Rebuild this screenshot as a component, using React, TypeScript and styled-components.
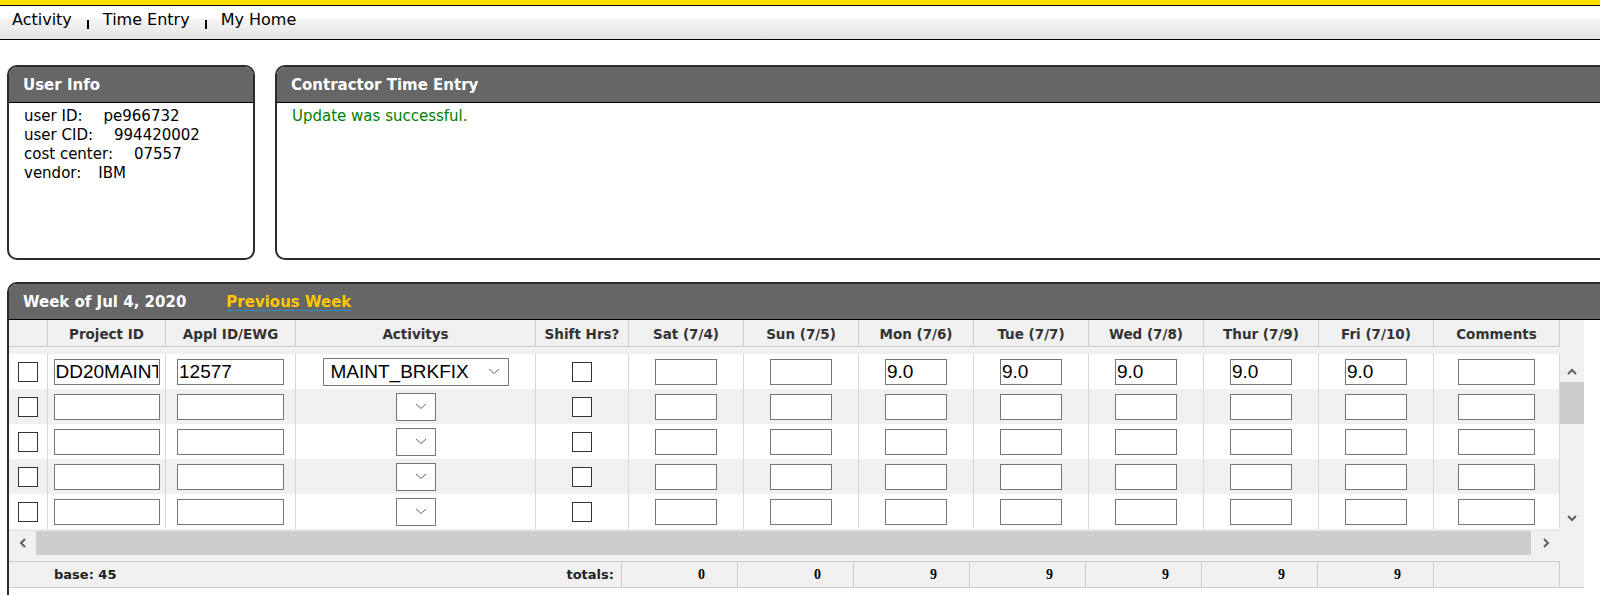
import styled, { createGlobalStyle } from "styled-components";

interface Row {
  project: string;
  appl: string;
  activity: string;
  days: string[];
}

const COLUMNS = [
  "",
  "Project ID",
  "Appl ID/EWG",
  "Activitys",
  "Shift Hrs?",
  "Sat (7/4)",
  "Sun (7/5)",
  "Mon (7/6)",
  "Tue (7/7)",
  "Wed (7/8)",
  "Thur (7/9)",
  "Fri (7/10)",
  "Comments",
];

const emptyDays = ["", "", "", "", "", "", ""];

const rows: Row[] = [
  {
    project: "DD20MAINT",
    appl: "12577",
    activity: "MAINT_BRKFIX",
    days: ["", "", "9.0", "9.0", "9.0", "9.0", "9.0"],
  },
  { project: "", appl: "", activity: "", days: emptyDays },
  { project: "", appl: "", activity: "", days: emptyDays },
  { project: "", appl: "", activity: "", days: emptyDays },
  { project: "", appl: "", activity: "", days: emptyDays },
];

const totals = [0, 0, 9, 9, 9, 9, 9];

const Chevron = ({ dir, size = 10 }: { dir: "up" | "down" | "left" | "right"; size?: number }) => {
  const rot = { down: 0, up: 180, left: 90, right: -90 }[dir];
  return (
    <svg width={size} height={size} viewBox="0 0 10 10" style={{ transform: `rotate(${rot}deg)` }}>
      <polyline points="1,3 5,7 9,3" fill="none" stroke="#606060" strokeWidth="2" />
    </svg>
  );
};

const SelectArrow = () => (
  <svg width="12" height="7" viewBox="0 0 12 7">
    <polyline points="1,1 6,5.5 11,1" fill="none" stroke="#666" strokeWidth="1" />
  </svg>
);

const App = () => {
  return (
    <Page>
      <GlobalStyle />
      <TopStrip />
      <Nav>
        <NavLink href="#">Activity</NavLink>
        <Sep />
        <NavLink href="#">Time Entry</NavLink>
        <Sep />
        <NavLink href="#">My Home</NavLink>
      </Nav>

      <Content>
        <TopRow>
          <Panel $width={248} $height={195}>
            <PanelHeader>User Info</PanelHeader>
            <PanelBody>
              <div>
                user ID:<Value $gap={21}>pe966732</Value>
              </div>
              <div>
                user CID:<Value $gap={21}>994420002</Value>
              </div>
              <div>
                cost center:<Value $gap={21}>07557</Value>
              </div>
              <div>
                vendor:<Value $gap={17}>IBM</Value>
              </div>
            </PanelBody>
          </Panel>
          <Panel $width={1400} $height={195}>
            <PanelHeader>Contractor Time Entry</PanelHeader>
            <PanelBody>
              <Success>Update was successful.</Success>
            </PanelBody>
          </Panel>
        </TopRow>

        <Panel $width={1640} $height={340}>
          <PanelHeader>
            <span>Week of Jul 4, 2020</span>
            <PrevLink href="#">Previous Week</PrevLink>
          </PanelHeader>
          <Grid>
            <HeaderRow>
              {COLUMNS.map((c, i) => (
                <HeaderCell key={i}>{c}</HeaderCell>
              ))}
            </HeaderRow>
            <ScrollArea>
              <RowsBox>
                {rows.map((r, i) => (
                  <BodyRow key={i} $alt={i % 2 === 1}>
                    <BodyCell>
                      <Check type="checkbox" />
                    </BodyCell>
                    <BodyCell>
                      <TextInput $w={106} defaultValue={r.project} />
                    </BodyCell>
                    <BodyCell>
                      <TextInput $w={107} defaultValue={r.appl} />
                    </BodyCell>
                    <BodyCell>
                      <FakeSelect $w={r.activity ? 186 : 40}>
                        {r.activity}
                        <SelectArrowBox>
                          <SelectArrow />
                        </SelectArrowBox>
                      </FakeSelect>
                    </BodyCell>
                    <BodyCell>
                      <Check type="checkbox" />
                    </BodyCell>
                    {r.days.map((d, j) => (
                      <BodyCell key={j}>
                        <TextInput $w={62} defaultValue={d} />
                      </BodyCell>
                    ))}
                    <BodyCell>
                      <TextInput $w={77} defaultValue="" />
                    </BodyCell>
                  </BodyRow>
                ))}
              </RowsBox>
              <VScroll>
                <ScrollBtn $h={28} $pt={7}>
                  <Chevron dir="up" />
                </ScrollBtn>
                <Thumb $h={42} />
                <ScrollFill />
                <ScrollBtn $h={24}>
                  <Chevron dir="down" />
                </ScrollBtn>
              </VScroll>
              <HScroll>
                <ScrollBtn $w={27}>
                  <Chevron dir="left" />
                </ScrollBtn>
                <Thumb $w={1495} />
                <ScrollBtn $w={29}>
                  <Chevron dir="right" />
                </ScrollBtn>
              </HScroll>
              <Corner />
            </ScrollArea>
            <FooterRow>
              <FooterLabel>
                <span>base: 45</span>
                <span>totals:</span>
              </FooterLabel>
              {totals.map((t, i) => (
                <TotalCell key={i}>{t}</TotalCell>
              ))}
              <TotalCell $last />
            </FooterRow>
          </Grid>
        </Panel>
      </Content>
    </Page>
  );
};

export default App;

const GlobalStyle = createGlobalStyle`
  html, body {
    margin: 0;
    padding: 0;
    overflow: hidden;
    background: #fff;
  }
  body {
    font-family: "DejaVu Sans", sans-serif;
    color: #000;
  }
`;

const Page = styled.div`
  width: 1700px;
`;

const TopStrip = styled.div`
  height: 5px;
  background: #ffe100;
  border-bottom: 1px solid #000;
`;

const Nav = styled.div`
  height: 34px;
  box-sizing: border-box;
  display: flex;
  align-items: center;
  padding: 0 12px 6px;
  background: linear-gradient(to bottom, #fff 0%, #fff 36%, #f4f4f4 40%, #ececec 70%, #e3e3e3 100%);
  border-bottom: 1px solid #000;
`;

const NavLink = styled.a`
  font-size: 16px;
  color: #000;
  text-decoration: none;
`;

const Sep = styled.span`
  display: inline-block;
  width: 2px;
  height: 9px;
  background: #000;
  margin: 10px 14px 0 15px;
`;

const Content = styled.div`
  padding: 25px 0 0 7px;
`;

const TopRow = styled.div`
  display: flex;
  gap: 20px;
  margin-bottom: 22px;
`;

const Panel = styled.div<{ $width: number; $height: number }>`
  width: ${(p) => p.$width}px;
  height: ${(p) => p.$height}px;
  flex-shrink: 0;
  box-sizing: border-box;
  border: 2px solid #2b2b2b;
  border-radius: 10px;
  overflow: hidden;
  background: #fff;
`;

const PanelHeader = styled.div`
  height: 36px;
  box-sizing: border-box;
  display: flex;
  align-items: center;
  gap: 40px;
  padding-left: 14px;
  background: #666;
  border-bottom: 1px solid #000;
  color: #fff;
  font-size: 15px;
  font-weight: bold;
`;

const PrevLink = styled.a`
  color: #ffc800;
  text-decoration: underline;
  text-decoration-color: #2f8fc0;
  text-underline-offset: 3px;
`;

const PanelBody = styled.div`
  padding: 4px 15px;
  font-size: 15px;
  line-height: 19px;
`;

const Value = styled.span<{ $gap: number }>`
  margin-left: ${(p) => p.$gap}px;
`;

const Success = styled.div`
  color: #008000;
`;

const COLS = "39px 118px 130px 240px 93px repeat(7, 115px) 126px";

const Grid = styled.div`
  width: 1575px;
  background: #f0f0f0;
  border-bottom: 1px solid #ccc;
`;

const HeaderRow = styled.div`
  display: grid;
  grid-template-columns: ${COLS};
  height: 27px;
  margin-bottom: 7px;
`;

const HeaderCell = styled.div`
  box-sizing: border-box;
  border-right: 1px solid #ccc;
  border-bottom: 1px solid #ccc;
  display: flex;
  align-items: center;
  justify-content: center;
  padding-top: 1px;
  font-size: 13.5px;
  font-weight: bold;
  color: #333;
`;

const ScrollArea = styled.div`
  display: grid;
  grid-template-columns: 1551px 24px;
  grid-template-rows: 176px 25px;
`;

const RowsBox = styled.div`
  overflow: hidden;
`;

const BodyRow = styled.div<{ $alt: boolean }>`
  display: grid;
  grid-template-columns: ${COLS};
  height: 35px;
  background: ${(p) => (p.$alt ? "#f0f0f0" : "#fff")};
`;

const BodyCell = styled.div`
  box-sizing: border-box;
  border-right: 1px solid #d8d8d8;
  display: flex;
  align-items: center;
  justify-content: center;
`;

const Check = styled.input`
  appearance: none;
  margin: 0;
  width: 20px;
  height: 20px;
  box-sizing: border-box;
  border: 1px solid #333;
  background: #fff;
`;

const TextInput = styled.input<{ $w: number }>`
  width: ${(p) => p.$w}px;
  height: 26px;
  box-sizing: border-box;
  border: 1px solid #767676;
  border-radius: 0;
  padding: 0 1px;
  margin: 0;
  background: #fff;
  color: #000;
  font-family: "Liberation Sans", Arial, sans-serif;
  font-size: 19px;
  outline: none;
`;

const FakeSelect = styled.div<{ $w: number }>`
  width: ${(p) => p.$w}px;
  height: 28px;
  box-sizing: border-box;
  border: 1px solid #767676;
  background: #fff;
  display: flex;
  align-items: center;
  padding: 0 8px 0 7px;
  font-family: "Liberation Sans", Arial, sans-serif;
  font-size: 19px;
  color: #000;
`;

const SelectArrowBox = styled.span`
  margin-left: auto;
  display: flex;
`;

const VScroll = styled.div`
  display: flex;
  flex-direction: column;
  background: #f0f0f0;
`;

const HScroll = styled.div`
  display: flex;
  background: #f0f0f0;
  border-top: 1px solid #e4e4e4;
`;

const ScrollBtn = styled.div<{ $w?: number; $h?: number; $pt?: number }>`
  ${(p) => (p.$w ? `width: ${p.$w}px;` : "")}
  ${(p) => (p.$h ? `height: ${p.$h}px;` : "")}
  box-sizing: border-box;
  padding-top: ${(p) => p.$pt || 0}px;
  flex-shrink: 0;
  display: flex;
  align-items: center;
  justify-content: center;
`;

const Thumb = styled.div<{ $w?: number; $h?: number }>`
  ${(p) => (p.$w ? `width: ${p.$w}px;` : "")}
  ${(p) => (p.$h ? `height: ${p.$h}px;` : "")}
  flex-shrink: 0;
  background: #cdcdcd;
`;

const ScrollFill = styled.div`
  flex: 1;
`;

const Corner = styled.div`
  background: #f0f0f0;
`;

const FooterRow = styled.div`
  display: grid;
  grid-template-columns: 612px repeat(7, 116px) 127px;
  width: 1551px;
  height: 26px;
  margin-top: 6px;
  box-sizing: border-box;
  border-top: 1px solid #ccc;
`;

const FooterLabel = styled.div`
  display: flex;
  align-items: center;
  justify-content: space-between;
  padding: 0 7px 0 45px;
  font-size: 13px;
  font-weight: bold;
  color: #222;
`;

const TotalCell = styled.div<{ $last?: boolean }>`
  box-sizing: border-box;
  border-left: 1px solid #ccc;
  ${(p) => (p.$last ? "border-right: 1px solid #ccc;" : "")}
  display: flex;
  align-items: center;
  justify-content: flex-end;
  padding-right: 32px;
  font-family: "Liberation Serif", "Times New Roman", serif;
  font-size: 14px;
  font-weight: bold;
`;
